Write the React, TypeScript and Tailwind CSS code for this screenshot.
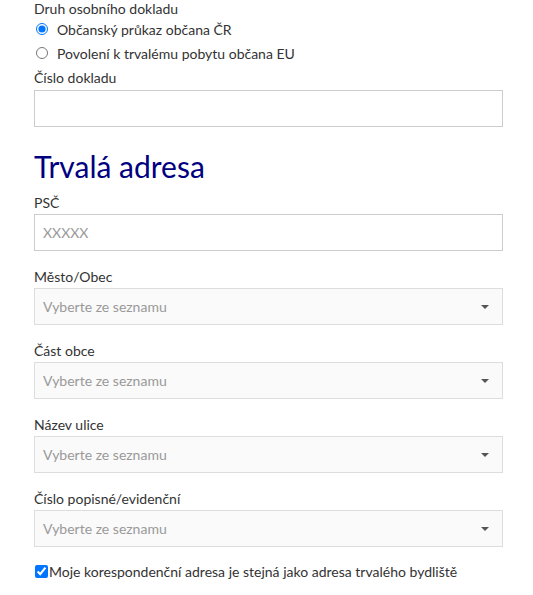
import React from "react";

const Caret = () => (
  <svg width="8" height="4" viewBox="0 0 8 4" className="absolute right-[13px] top-1/2 -translate-y-1/2">
    <path d="M0 0 L8 0 L4 4 Z" fill="#555" />
  </svg>
);

const SelectField = ({ label }: { label: string }) => (
  <div className="flex flex-col">
    <label className="h-[20px] leading-[20px] mb-[1px] text-[14px] text-[#333]">{label}</label>
    <div className="relative h-[37px] border border-[#ddd] bg-[#fafafa] flex items-center px-[8px] text-[14px] text-[#999]">
      Vyberte ze seznamu
      <Caret />
    </div>
  </div>
);

export default function App() {
  return (
    <div className="w-[533px] h-[595px] bg-white overflow-hidden" style={{ fontFamily: "Lato, 'Noto Sans', sans-serif" }}>
      <div className="pl-[34px] pr-[30px] pt-0 flex flex-col text-[#333] text-[14px]">
        <div className="h-[17px] leading-[17px]">Druh osobního dokladu</div>
        <label className="flex items-center h-[24px]">
          <input type="radio" name="doc" defaultChecked className="m-0 ml-[2px] w-[12px] h-[12px]" />
          <span className="ml-[9px]">Občanský průkaz občana ČR</span>
        </label>
        <label className="flex items-center h-[24px]">
          <input type="radio" name="doc" className="m-0 ml-[2px] w-[12px] h-[12px]" />
          <span className="ml-[9px]">Povolení k trvalému pobytu občana EU</span>
        </label>
        <div className="h-[20px] leading-[20px] mt-[3px]">Číslo dokladu</div>
        <input type="text" className="mt-[2px] h-[37px] border border-[#ccc] bg-white outline-none px-[8px]" />
        <h2 className="mt-[21px] h-[36px] leading-[36px] text-[30px] text-[#000080]">Trvalá adresa</h2>
        <div className="mt-[9px] h-[20px] leading-[20px]">PSČ</div>
        <input type="text" placeholder="XXXXX" className="mt-[1px] h-[37px] border border-[#ccc] bg-white outline-none px-[8px] placeholder:text-[#999]" />
        <div className="flex flex-col gap-[16px] mt-[16px]">
          <SelectField label="Město/Obec" />
          <SelectField label="Část obce" />
          <SelectField label="Název ulice" />
          <SelectField label="Číslo popisné/evidenční" />
        </div>
        <label className="flex items-center mt-[14px] h-[20px]">
          <input type="checkbox" defaultChecked className="m-0 ml-[1px] w-[13px] h-[13px]" />
          <span className="ml-[1px]">Moje korespondenční adresa je stejná jako adresa trvalého bydliště</span>
        </label>
      </div>
    </div>
  );
}
